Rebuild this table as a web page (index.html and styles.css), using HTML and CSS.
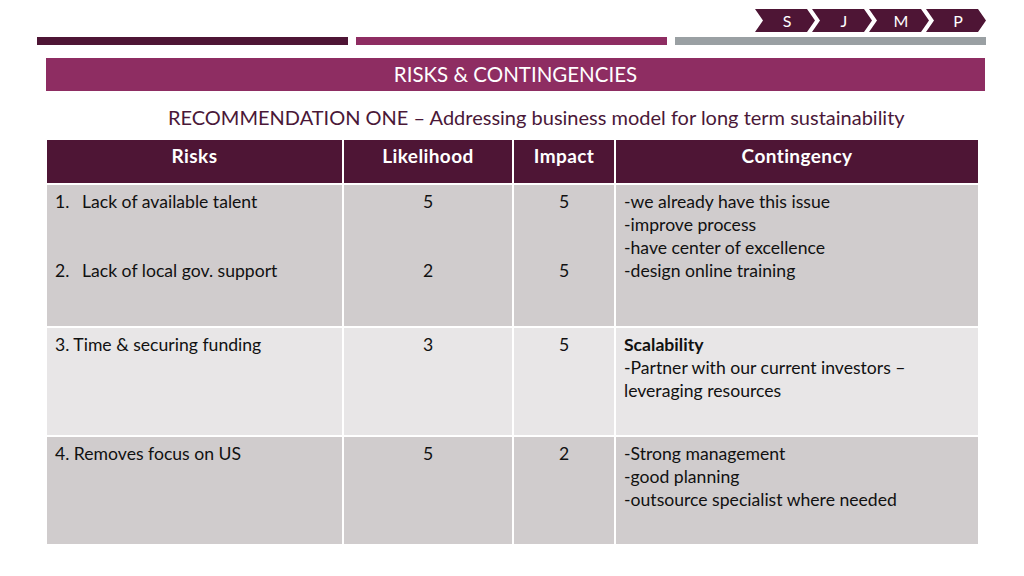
FILE: index.html
```html
<!DOCTYPE html>
<html lang="en">
<head>
<meta charset="utf-8">
<title>Risks &amp; Contingencies</title>
<link rel="stylesheet" href="styles.css">
</head>
<body>
<div class="slide">
  <nav class="steps">
    <span class="step">S</span>
    <span class="step">J</span>
    <span class="step">M</span>
    <span class="step">P</span>
  </nav>
  <div class="bars">
    <span class="bar bar-dark"></span>
    <span class="bar bar-magenta"></span>
    <span class="bar bar-gray"></span>
  </div>
  <h1 class="title">RISKS &amp; CONTINGENCIES</h1>
  <h2 class="subtitle">RECOMMENDATION ONE – Addressing business model for long term sustainability</h2>
  <table class="risk-table">
    <colgroup>
      <col class="c-risk">
      <col class="c-like">
      <col class="c-impact">
      <col class="c-cont">
    </colgroup>
    <thead>
      <tr>
        <th>Risks</th>
        <th>Likelihood</th>
        <th>Impact</th>
        <th>Contingency</th>
      </tr>
    </thead>
    <tbody>
      <tr class="row-a r1">
        <td>
          <ol class="risk-list">
            <li><span class="num">1.</span>Lack of available talent</li>
            <li class="gap"><span class="num">2.</span>Lack of local gov. support</li>
          </ol>
        </td>
        <td class="num-cell"><div>5</div><div class="gap">2</div></td>
        <td class="num-cell"><div>5</div><div class="gap">5</div></td>
        <td>-we already have this issue<br>-improve process<br>-have center of excellence<br>-design online training</td>
      </tr>
      <tr class="row-b r2">
        <td>3. Time &amp; securing funding</td>
        <td class="num-cell">3</td>
        <td class="num-cell">5</td>
        <td><strong>Scalability</strong><br>-Partner with our current investors –<br>leveraging resources</td>
      </tr>
      <tr class="row-a r3">
        <td>4. Removes focus on US</td>
        <td class="num-cell">5</td>
        <td class="num-cell">2</td>
        <td>-Strong management<br>-good planning<br>-outsource specialist where needed</td>
      </tr>
    </tbody>
  </table>
</div>
</body>
</html>
```
FILE: styles.css
```css
* { box-sizing: border-box; }
html, body { margin: 0; padding: 0; background: #ffffff; }
body {
  font-family: "Lato", "Open Sans", "Liberation Sans", sans-serif;
  color: #111111;
  width: 1024px;
  height: 576px;
  overflow: hidden;
}
.slide { padding-top: 9px; }

.steps {
  display: flex;
  justify-content: flex-end;
  padding-right: 38px;
  height: 23px;
}
.step {
  width: 60px;
  height: 23px;
  margin-left: -3px;
  background: #4e1535;
  color: #ffffff;
  font-size: 16px;
  line-height: 23px;
  text-align: center;
  padding-left: 4px;
  clip-path: polygon(0 0, calc(100% - 8px) 0, 100% 50%, calc(100% - 8px) 100%, 0 100%, 8px 50%);
}

.bars {
  display: flex;
  gap: 8px;
  margin: 5px 38px 0 37px;
}
.bar { flex: 1; height: 8px; }
.bar-dark { background: #4e1535; }
.bar-magenta { background: #8e2d62; }
.bar-gray { background: #9aa0a3; }

.title {
  margin: 13px 39px 0 46px;
  height: 33px;
  background: #8e2d62;
  color: #ffffff;
  font-weight: normal;
  font-size: 20.5px;
  line-height: 33px;
  text-align: center;
}

.subtitle {
  margin: 14px 0 0 168px;
  font-weight: normal;
  font-size: 20px;
  line-height: 24px;
  color: #4a1838;
}

.risk-table {
  margin: 11px 0 0 45px;
  width: 933px;
  table-layout: fixed;
  border-collapse: collapse;
  font-size: 17.6px;
  line-height: 23px;
}
.c-risk { width: 297px; }
.c-like { width: 170px; }
.c-impact { width: 102px; }
.c-cont { width: 364px; }

.risk-table th,
.risk-table td {
  border: 2px solid #ffffff;
  vertical-align: top;
  text-align: left;
  padding: 5px 8px;
}
.risk-table thead th {
  background: #4e1535;
  color: #ffffff;
  font-weight: bold;
  font-size: 19px;
  letter-spacing: 0.4px;
  text-align: center;
  height: 44px;
  padding-top: 4px;
  border-top: none;
}
.risk-table thead th + th { border-left-color: #e6cfdb; }
.row-a td { background: #d0cccd; }
.row-b td { background: #e8e6e7; }
.r1 td { height: 143px; }
.r2 td, .r3 td { height: 109px; }
.risk-table td.num-cell { text-align: center; }

.risk-list { list-style: none; margin: 0; padding: 0; }
.risk-list .num { display: inline-block; width: 27px; }
.gap { margin-top: 46px; }
.risk-table strong { font-weight: bold; }
```
